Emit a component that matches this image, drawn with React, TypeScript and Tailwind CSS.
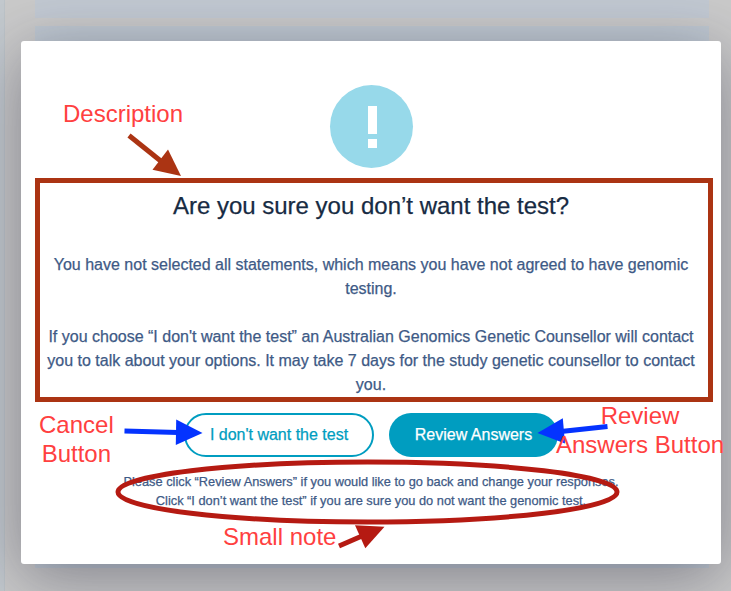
import React from "react";

function Backdrop() {
  return (
    <div className="absolute inset-0 bg-[#cacaca]">
      <div className="absolute inset-y-0 left-0 w-[5px] border-r border-[#bcc3c8] bg-[#c3c9ce]" />
      <div className="flex h-full flex-col gap-2 pr-[22px] pl-[35px]">
        <div className="h-[18px] bg-[#c2c9d2]" />
        <div className="h-[542px] bg-[#bfc8d1]" />
      </div>
    </div>
  );
}

function Annotations() {
  const label =
    "absolute whitespace-nowrap text-center text-[24px] leading-[29px] text-[#ff4040]";
  return (
    <div className="pointer-events-none absolute inset-0">
      <div className="absolute top-[178px] left-[35px] h-[224px] w-[678px] border-[5px] border-[#ab3413]" />
      <svg className="absolute inset-0" width="731" height="591" viewBox="0 0 731 591">
        <path d="M129 135.500 L162 162" stroke="#ab3413" strokeWidth="5" />
        <path d="M168 149.500 L181 176 L152.500 169.800Z" fill="#ab3413" />
        <path d="M124.500 431 L178 432.500" stroke="#0433ff" strokeWidth="5" />
        <path d="M176.200 419.500 L202.500 433 L175.800 445Z" fill="#0433ff" />
        <path d="M607.500 426.500 L561 431.500" stroke="#0433ff" strokeWidth="5" />
        <path d="M562.800 418.300 L537.500 433 L565 443.500Z" fill="#0433ff" />
        <ellipse cx="367.500" cy="492" rx="249.500" ry="30" fill="none" stroke="#b51a12" strokeWidth="5" />
        <path d="M339 546 L362 536" stroke="#b51a12" strokeWidth="5" />
        <path d="M355 525.300 L384.500 526.800 L365.300 548.300Z" fill="#b51a12" />
      </svg>
      <div className={`${label} top-[99px] left-[63px]`}>Description</div>
      <div className={`${label} top-[410px] left-[39px]`}>
        Cancel
        <br />
        Button
      </div>
      <div className={`${label} top-[401px] left-[556px]`}>
        Review
        <br />
        Answers Button
      </div>
      <div className={`${label} top-[522px] left-[223px]`}>Small note</div>
    </div>
  );
}

export default function App() {
  return (
    <div className="relative h-[591px] w-[731px] overflow-hidden font-['Liberation_Sans',Arial,sans-serif]">
      <Backdrop />
      <div className="relative pt-[41px] pl-[21px]">
        <div className="flex h-[523px] w-[700px] flex-col items-center rounded-[3px] bg-white pt-11 whitespace-nowrap text-[#3e5a86] shadow-[0_13px_64px_rgba(26,26,48,0.42)] [-webkit-text-stroke:0.25px]">
          <div className="ml-px flex h-[83px] w-[83px] flex-col items-center gap-[5px] rounded-full bg-[#97d9ea] pt-[21px] pl-px">
            <div className="h-7 w-[9px] bg-white" />
            <div className="h-[9px] w-[9px] bg-white" />
          </div>
          <h2 className="mt-[22px] text-[24px] leading-8 text-[#172b43]">
            Are you sure you don’t want the test?
          </h2>
          <div className="mt-[31px] text-center text-[16px] leading-6">
            <p>You have not selected all statements, which means you have not agreed to have genomic</p>
            <p>testing.</p>
            <p className="mt-6">If you choose “I don't want the test” an Australian Genomics Genetic Counsellor will contact</p>
            <p>you to talk about your options. It may take 7 days for the study genetic counsellor to contact</p>
            <p>you.</p>
          </div>
          <div className="mt-4 flex gap-[15px] text-[16px]">
            <button className="h-11 w-[190px] rounded-full border-2 border-[#009dc0] text-[#009dc0]">
              I don't want the test
            </button>
            <button className="h-11 w-[169px] rounded-full bg-[#009dc0] text-white">
              Review Answers
            </button>
          </div>
          <div className="mt-[15px] text-center text-[12.8px] leading-[19px]">
            <p>Please click “Review Answers” if you would like to go back and change your responses.</p>
            <p>Click “I don’t want the test” if you are sure you do not want the genomic test.</p>
          </div>
        </div>
      </div>
      <Annotations />
    </div>
  );
}
